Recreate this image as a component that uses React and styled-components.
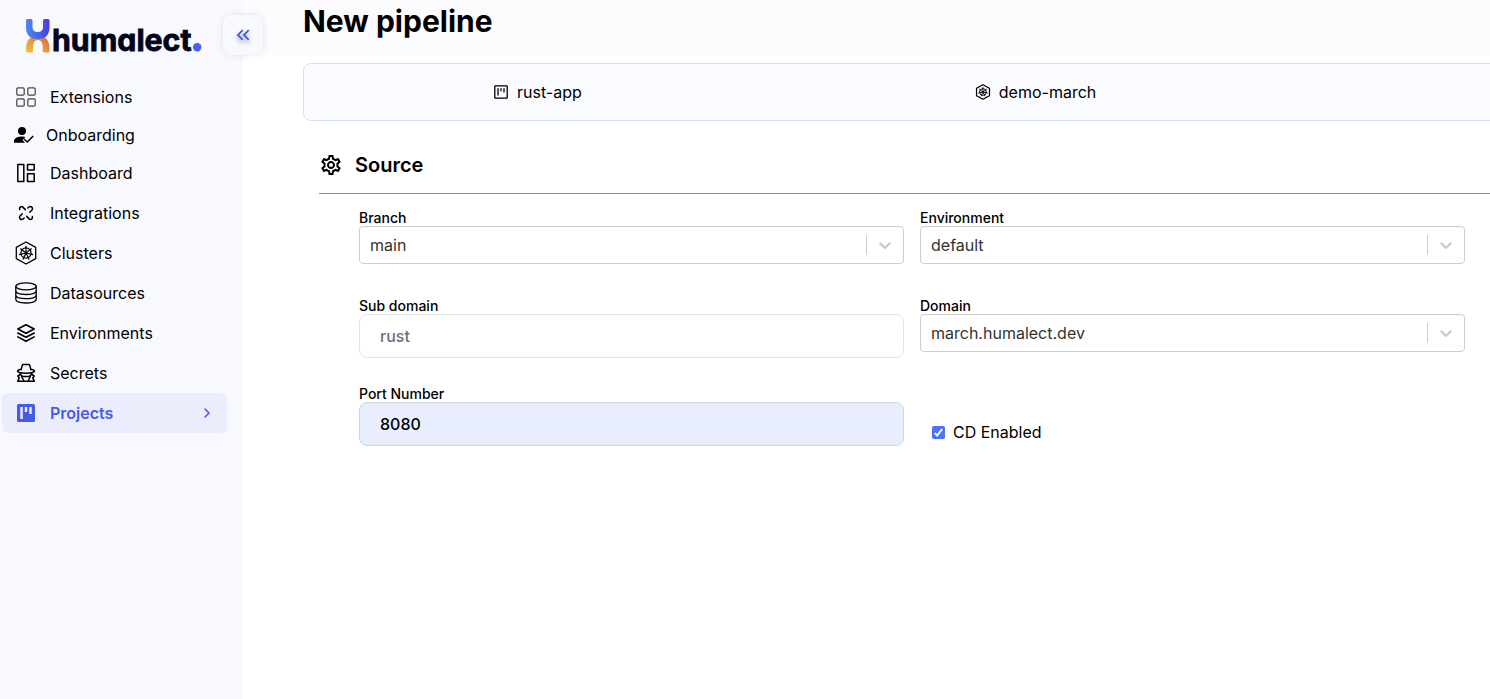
import React from "react";
import styled, { createGlobalStyle, css } from "styled-components";
import { MdOutlineSettings, MdKeyboardDoubleArrowLeft } from "react-icons/md";
import { FiChevronRight } from "react-icons/fi";

const GlobalStyle = createGlobalStyle`
  *, *::before, *::after { box-sizing: border-box; }
  body {
    margin: 0;
    overflow: hidden;
    background: #fff;
    color: #000;
    font-family: Inter, "Liberation Sans", sans-serif;
    font-size: 16px;
  }
`;

const Page = styled.div`
  display: flex;
  height: 100vh;
  overflow: hidden;
`;

const Sidebar = styled.aside`
  position: relative;
  z-index: 1;
  flex: 0 0 243px;
  background: #f8f9fe;
`;

const LogoRow = styled.div`
  height: 77px;
  padding: 18px 0 0 25px;
  svg { display: block; overflow: visible; }
`;

const LogoText = styled.text`
  fill: #04041a;
  font-family: Inter, sans-serif;
  font-weight: 700;
  font-size: 30px;
  font-feature-settings: "cv11";
  stroke: #04041a;
  stroke-width: 0.8px;
`;

const CollapseButton = styled.button`
  position: absolute;
  top: 15px;
  left: 223px;
  width: 40px;
  height: 40px;
  display: flex;
  align-items: center;
  justify-content: center;
  padding: 0;
  border: 0;
  border-radius: 8px;
  background: #f8f9fe;
  color: #465be8;
  box-shadow: 0 0 6px rgba(0, 0, 0, 0.1);
  svg { filter: drop-shadow(0 3px 2px rgba(0, 0, 0, 0.35)); }
`;

const NavItem = styled.a`
  display: flex;
  align-items: center;
  height: ${(p) => (p.$compact ? 36 : 40)}px;
  width: 225px;
  margin-left: 2px;
  padding: 0 12px 0 ${(p) => (p.$compact ? 10 : 12)}px;
  gap: ${(p) => (p.$compact ? 10 : 12)}px;
  border-radius: 6px;
  line-height: 24px;
  ${(p) =>
    p.$active &&
    css`
      background: #ebecfc;
      color: #465be8;
      font-weight: 600;
    `}
`;

const NavLabel = styled.span`
  flex: 1;
`;

const IconSlot = styled.span`
  flex: 0 0 24px;
  display: flex;
  justify-content: center;
`;

const Main = styled.main`
  flex: 1;
  min-width: 0;
  overflow: hidden;
`;

const Header = styled.header`
  height: 55px;
  padding-left: 60px;
  background: #fcfcfe;
`;

const Title = styled.h1`
  margin: 0;
  font-size: 30px;
  line-height: 42px;
  font-weight: 700;
`;

const SummaryCard = styled.section`
  display: flex;
  align-items: center;
  gap: 393px;
  width: 1240px;
  height: 58px;
  margin: 8px 0 0 60px;
  padding-left: 190px;
  border: 1px solid #d5def2;
  border-radius: 8px;
  background: #fafbff;
`;

const SummaryItem = styled.div`
  display: flex;
  align-items: center;
  gap: ${(p) => p.$gap}px;
`;

const SectionHeader = styled.div`
  display: flex;
  align-items: center;
  gap: 12px;
  width: 1200px;
  height: 73px;
  margin-left: 76px;
  padding: 15px 0 0;
  border-bottom: 1px solid #8e8f92;
`;

const SectionTitle = styled.h2`
  margin: 0;
  font-size: 20px;
  line-height: 28px;
  font-weight: 600;
`;

const FormGrid = styled.form`
  display: grid;
  grid-template-columns: 545px 545px;
  grid-auto-rows: 88px;
  column-gap: 16px;
  padding: 15px 0 0 116px;
`;

const Field = styled.div`
  display: flex;
  flex-direction: column;
`;

const Label = styled.label`
  height: 17px;
  font-size: 14px;
  line-height: 18px;
  font-weight: 500;
`;

const SelectBox = styled.div`
  display: flex;
  align-items: center;
  height: 38px;
  padding-left: 10px;
  border: 1px solid #ccc;
  border-radius: 4px;
  color: #333;
`;

const SelectValue = styled.span`
  flex: 1;
`;

const SelectArrow = styled.span`
  display: flex;
  align-items: center;
  justify-content: center;
  width: 37px;
  height: 20px;
  border-left: 1px solid #ccc;
  color: #ccc;
`;

const TextInput = styled.input`
  width: 100%;
  height: 44px;
  padding: 0 20px;
  border: 1px solid ${(p) => (p.$filled ? "#d0d5e5" : "#e2e2e6")};
  border-radius: 8px;
  background: ${(p) => (p.$filled ? "#e8eefd" : "#fff")};
  font: 500 16px Inter, sans-serif;
  color: #000;
  outline: none;
  &::placeholder { color: #6d6d82; opacity: 1; font-weight: 550; }
`;

const CheckRow = styled.label`
  display: flex;
  align-items: center;
  gap: 8px;
  height: 24px;
  margin: 35px 0 0 12px;
`;

const CheckMark = styled.span`
  display: flex;
  width: 13px;
  height: 13px;
  border-radius: 2px;
  background: #4a72fb;
`;

const Logo = () => (
  <svg width="180" height="44" viewBox="0 0 180 44">
    <defs>
      <linearGradient id="cool" x1="0" y1="0" x2="1" y2="0">
        <stop offset="0" stopColor="#4c86ee" />
        <stop offset=".5" stopColor="#4668f0" />
        <stop offset="1" stopColor="#4a3be0" />
      </linearGradient>
      <linearGradient id="warm" x1="0" y1="1" x2="1" y2="0">
        <stop offset="0" stopColor="#ecc54a" />
        <stop offset="1" stopColor="#d9663a" />
      </linearGradient>
    </defs>
    <path fill="url(#warm)" d="M1 33V30Q1 21 9 17H17Q24.500 21 24.500 30V33Q24.500 34.500 23 34.500H19.200Q17.700 34.500 17.700 33V29Q17.700 22 12.900 22T8 29V33Q8 34.500 6.500 34.500H2.500Q1 34.500 1 33Z" />
    <path fill="url(#cool)" d="M1 2.500Q1 1 2.500 1H6Q7.500 1 7.500 2.500V9Q7.500 14 12.700 14T18 9V2.500Q18 1 19.500 1H23Q24.500 1 24.500 2.500V9Q24.500 21 12.700 21T1 9Z" />
    <LogoText x="27" y="33.300" textLength="139.500" lengthAdjust="spacingAndGlyphs">humalect</LogoText>
    <circle cx="172.200" cy="29.200" r="4.200" fill="#4a60f0" />
  </svg>
);

const GridIcon = () => (
  <svg width="20" height="20" viewBox="0 0 20 20" fill="none" stroke="#444" strokeWidth="1.200">
    <rect x=".8" y=".8" width="7.400" height="7.400" rx="1.200" />
    <rect x="11.800" y=".8" width="7.400" height="7.400" rx="1.200" />
    <rect x=".8" y="11.800" width="7.400" height="7.400" rx="1.200" />
    <rect x="11.800" y="11.800" width="7.400" height="7.400" rx="1.200" />
  </svg>
);

const PersonCheckIcon = () => (
  <svg width="24" height="24" viewBox="0 0 24 24">
    <circle cx="10" cy="8" r="4" fill="currentColor" />
    <path fill="currentColor" d="M10 13.500Q12 13.500 13.500 14L10.500 17L13 19.700H2V17.800C2 15 6.500 13.500 10 13.500Z" />
    <path fill="none" stroke="currentColor" strokeWidth="1.600" d="M12 16L15.300 19L21.200 13" />
  </svg>
);

const DashboardIcon = () => (
  <svg width="20" height="20" viewBox="0 0 20 20" fill="none" stroke="currentColor" strokeWidth="1.500" strokeLinejoin="round">
    <path d="M1.800 1.500H7.800V18.500H1.800ZM11.500 1.500H18.200V7H11.500ZM11.500 10.800H18.200V18.500H11.500Z" />
  </svg>
);

const IntegrationsIcon = () => (
  <svg width="16" height="16" viewBox="0 0 16 16" fill="none" stroke="currentColor" strokeWidth="1.500" strokeLinecap="round" strokeLinejoin="round">
    <path d="M1.700 4.600C.9 2.500 2.900 .9 4.600 1.900L7.300 4.600" />
    <path d="M9.800 3L11.200 1.800C13.200 .7 15.300 2.800 14.200 4.800L11.800 7.200" />
    <path d="M14.300 11.400C15.100 13.500 13.100 15.100 11.400 14.100L8.700 11.400" />
    <path d="M6.200 13L4.800 14.200C2.800 15.300 .7 13.200 1.800 11.200L4.200 8.800" />
  </svg>
);

const spokes = [0, 1, 2, 3, 4, 5, 6].map((i) => {
  const a = (i * 2 * Math.PI) / 7 - Math.PI / 2;
  return `M12 12L${(12 + 7.2 * Math.cos(a)).toFixed(2)} ${(12 + 7.2 * Math.sin(a)).toFixed(2)}`;
}).join("");

const ClusterIcon = ({ size = 24, stroke = 1.3, spoke = 1.2 }) => (
  <svg width={size} height={size} viewBox="0 0 24 24" fill="none" stroke="currentColor" strokeWidth={stroke} strokeLinejoin="round">
    <path d="M12 1L21.700 6.400V17.600L12 23L2.300 17.600V6.400Z" />
    <circle cx="12" cy="12" r="5.100" strokeWidth={spoke} />
    <path d={spokes} strokeWidth={spoke} />
  </svg>
);

const DatabaseIcon = () => (
  <svg width="24" height="24" viewBox="0 0 24 24" fill="none" stroke="currentColor" strokeWidth="1.300">
    <ellipse cx="12" cy="5.300" rx="10.200" ry="3.500" />
    <path d="M1.800 5.300V18.300C1.800 23.200 22.200 23.200 22.200 18.300V5.300M1.800 9.800C1.800 14.700 22.200 14.700 22.200 9.800M1.800 14C1.800 18.900 22.200 18.900 22.200 14" />
  </svg>
);

const LayersIcon = () => (
  <svg width="20" height="20" viewBox="0 0 20 20" fill="none" stroke="currentColor" strokeWidth="1.600" strokeLinejoin="round" strokeLinecap="round">
    <path d="M10 1.700L18.200 6L10 10.300L1.800 6ZM1.800 10L10 14.300L18.200 10M1.800 13.900L10 18.200L18.200 13.900" />
  </svg>
);

const SpyIcon = () => (
  <svg width="20" height="20" viewBox="0 0 20 20" fill="none" stroke="currentColor" strokeWidth="1.500" strokeLinejoin="round">
    <path d="M5 7.200L6.200 2.400Q6.500 1.600 7.300 1.600H12.700Q13.500 1.600 13.800 2.400L15 7.200" />
    <path d="M5 6.300Q1.600 7 1.600 8.300Q3 10.200 10 10.200T18.400 8.300Q18.400 7 15 6.300" />
    <path d="M4.300 10Q4.500 12.600 7 13.400H13Q15.500 12.600 15.700 10" />
    <path d="M4.300 11.500L1.800 13L3.300 15L1.700 18.200H18.300L16.700 15L18.200 13L15.700 11.500M5.300 13L8 18M14.700 13L12 18" />
  </svg>
);

const BoardIcon = () => (
  <svg width="14" height="14" viewBox="0 0 14 14" fill="none" stroke="currentColor">
    <rect x=".8" y=".8" width="12.400" height="12.400" rx=".5" strokeWidth="1.300" />
    <path d="M4 3.200V10.500M7 3.200V6.300M10 3.200V7.500" strokeWidth="1.500" stroke="#222" />
  </svg>
);

const BoardFilledIcon = () => (
  <svg width="18" height="18" viewBox="0 0 18 18">
    <rect width="18" height="18" rx="1.500" fill="currentColor" />
    <path d="M3.300 3H5.800V15H3.300ZM7.800 3H10.200V8H7.800ZM12.200 3H14.700V10H12.200Z" fill="#ebecfc" />
  </svg>
);

const ChevronDown = () => (
  <svg width="20" height="20" viewBox="0 0 20 20" fill="currentColor">
    <path d="M4.516 7.548c0.436-0.446 1.043-0.481 1.576 0l3.908 3.747 3.908-3.747c0.533-0.481 1.141-0.446 1.574 0 0.436 0.445 0.408 1.197 0 1.615-0.406 0.418-4.695 4.502-4.695 4.502-0.217 0.223-0.502 0.335-0.787 0.335s-0.570-0.112-0.789-0.335c0 0-4.287-4.084-4.695-4.502s-0.436-1.170 0-1.615z" />
  </svg>
);

const navItems = [
  { label: "Extensions", icon: <GridIcon /> },
  { label: "Onboarding", icon: <PersonCheckIcon />, compact: true },
  { label: "Dashboard", icon: <DashboardIcon /> },
  { label: "Integrations", icon: <IntegrationsIcon /> },
  { label: "Clusters", icon: <ClusterIcon /> },
  { label: "Datasources", icon: <DatabaseIcon /> },
  { label: "Environments", icon: <LayersIcon /> },
  { label: "Secrets", icon: <SpyIcon /> },
  { label: "Projects", icon: <BoardFilledIcon />, active: true },
];

const SelectField = ({ label, value }) => (
  <Field>
    <Label>{label}</Label>
    <SelectBox>
      <SelectValue>{value}</SelectValue>
      <SelectArrow><ChevronDown /></SelectArrow>
    </SelectBox>
  </Field>
);

export default function App() {
  return (
    <Page>
      <GlobalStyle />
      <Sidebar>
        <LogoRow><Logo /></LogoRow>
        <CollapseButton aria-label="Collapse sidebar"><MdKeyboardDoubleArrowLeft size={22} /></CollapseButton>
        <nav>
          {navItems.map(({ label, icon, compact, active }) => (
            <NavItem key={label} $compact={compact} $active={active}>
              <IconSlot>{icon}</IconSlot>
              <NavLabel>{label}</NavLabel>
              {active && <FiChevronRight size={16} strokeWidth={2.4} />}
            </NavItem>
          ))}
        </nav>
      </Sidebar>
      <Main>
        <Header><Title>New pipeline</Title></Header>
        <SummaryCard>
          <SummaryItem $gap={9}><BoardIcon />rust-app</SummaryItem>
          <SummaryItem $gap={8}><ClusterIcon size={16} stroke={1.8} spoke={1.4} />demo-march</SummaryItem>
        </SummaryCard>
        <SectionHeader>
          <MdOutlineSettings size={24} />
          <SectionTitle>Source</SectionTitle>
        </SectionHeader>
        <FormGrid>
          <SelectField label="Branch" value="main" />
          <SelectField label="Environment" value="default" />
          <Field>
            <Label htmlFor="sub">Sub domain</Label>
            <TextInput id="sub" placeholder="rust" />
          </Field>
          <SelectField label="Domain" value="march.humalect.dev" />
          <Field>
            <Label htmlFor="port">Port Number</Label>
            <TextInput id="port" $filled defaultValue="8080" />
          </Field>
          <Field>
            <CheckRow>
              <CheckMark>
                <svg width="13" height="13" viewBox="0 0 13 13" fill="none" stroke="#fff" strokeWidth="2">
                  <path d="M2.700 7L5.200 9.500L10.200 3" />
                </svg>
              </CheckMark>
              CD Enabled
            </CheckRow>
          </Field>
        </FormGrid>
      </Main>
    </Page>
  );
}
